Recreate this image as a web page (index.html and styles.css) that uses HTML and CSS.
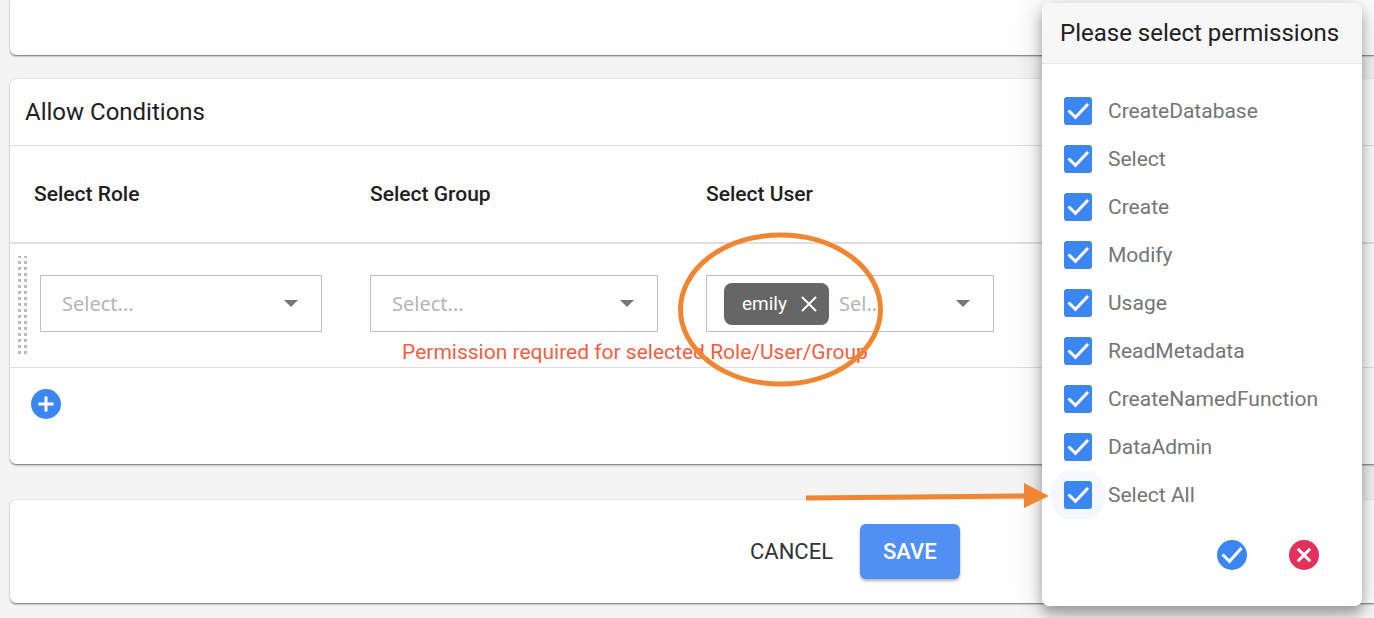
FILE: index.html
```html
<!DOCTYPE html>
<html lang="en">
<head>
<meta charset="utf-8">
<title>Policy permissions</title>
<link rel="stylesheet" href="styles.css">
</head>
<body>
<main class="page">
  <section class="card card-previous"></section>

  <section class="card card-conditions">
    <h2 class="card-title">Allow Conditions</h2>
    <table class="conditions">
      <colgroup>
        <col class="col-handle"><col class="col-role"><col class="col-wide"><col class="col-wide"><col>
      </colgroup>
      <thead>
        <tr>
          <th colspan="2" scope="col" id="role">Select Role</th>
          <th scope="col" id="group">Select Group</th>
          <th scope="col" id="user">Select User</th>
          <th></th>
        </tr>
      </thead>
      <tbody>
        <tr>
          <td rowspan="2" class="cell-handle"><div class="handle"></div></td>
          <td class="cell-role">
            <div class="field">
              <select class="field-select" aria-labelledby="role"><option>Select...</option></select>
              <svg class="caret" viewBox="0 0 14 7"><path d="M0 0h14L7 7z"/></svg>
            </div>
          </td>
          <td class="cell-field">
            <div class="field">
              <select class="field-select" aria-labelledby="group"><option>Select...</option></select>
              <svg class="caret" viewBox="0 0 14 7"><path d="M0 0h14L7 7z"/></svg>
            </div>
          </td>
          <td class="cell-field">
            <div class="field field-multi">
              <span class="chip">emily
                <button class="chip-remove" type="button" aria-label="Remove emily"><svg viewBox="0 0 16 16"><path d="M1 1l14 14M15 1L1 15"/></svg></button>
              </span>
              <select class="field-select" aria-labelledby="user"><option>Sel...</option></select>
              <svg class="caret" viewBox="0 0 14 7"><path d="M0 0h14L7 7z"/></svg>
            </div>
          </td>
          <td></td>
        </tr>
        <tr>
          <td></td>
          <td colspan="3" class="cell-error">Permission required for selected Role/User/Group</td>
        </tr>
      </tbody>
    </table>
    <div class="add-row">
      <button class="round" type="button" aria-label="Add condition"><svg viewBox="0 0 30 30"><path class="thick" d="M15 7.5v15M7.5 15h15"/></svg></button>
    </div>
  </section>

  <section class="card card-actions">
    <button class="btn" type="button">CANCEL</button>
    <button class="btn btn-primary" type="button">SAVE</button>
  </section>
</main>

<aside class="popover" role="dialog" aria-labelledby="popover-title">
  <h3 class="popover-title" id="popover-title">Please select permissions</h3>
  <div class="permissions">
    <label class="permission"><span class="tick"><input type="checkbox" checked><svg viewBox="0 0 28 28"><path d="M4.500 13.500l7 6.800L24 7"/></svg></span>CreateDatabase</label>
    <label class="permission"><span class="tick"><input type="checkbox" checked><svg viewBox="0 0 28 28"><path d="M4.500 13.500l7 6.800L24 7"/></svg></span>Select</label>
    <label class="permission"><span class="tick"><input type="checkbox" checked><svg viewBox="0 0 28 28"><path d="M4.500 13.500l7 6.800L24 7"/></svg></span>Create</label>
    <label class="permission"><span class="tick"><input type="checkbox" checked><svg viewBox="0 0 28 28"><path d="M4.500 13.500l7 6.800L24 7"/></svg></span>Modify</label>
    <label class="permission"><span class="tick"><input type="checkbox" checked><svg viewBox="0 0 28 28"><path d="M4.500 13.500l7 6.800L24 7"/></svg></span>Usage</label>
    <label class="permission"><span class="tick"><input type="checkbox" checked><svg viewBox="0 0 28 28"><path d="M4.500 13.500l7 6.800L24 7"/></svg></span>ReadMetadata</label>
    <label class="permission"><span class="tick"><input type="checkbox" checked><svg viewBox="0 0 28 28"><path d="M4.500 13.500l7 6.800L24 7"/></svg></span>CreateNamedFunction</label>
    <label class="permission"><span class="tick"><input type="checkbox" checked><svg viewBox="0 0 28 28"><path d="M4.500 13.500l7 6.800L24 7"/></svg></span>DataAdmin</label>
    <label class="permission"><span class="tick tick-focus"><input type="checkbox" checked><svg viewBox="0 0 28 28"><path d="M4.500 13.500l7 6.800L24 7"/></svg></span>Select All</label>
  </div>
  <div class="popover-actions">
    <button class="round" type="button" aria-label="Apply"><svg viewBox="0 0 30 30"><path d="M5.500 14.500l7 6.800L24.500 8"/></svg></button>
    <button class="round round-danger" type="button" aria-label="Dismiss"><svg viewBox="0 0 30 30"><path class="thick" d="M8.800 8.800l12.400 12.400M21.200 8.800L8.800 21.200"/></svg></button>
  </div>
</aside>

<svg class="mark mark-ellipse" viewBox="0 0 206 156"><ellipse cx="102.500" cy="77.500" rx="100" ry="74.500"/></svg>
<svg class="mark mark-arrow" viewBox="0 0 244 26"><path class="line" d="M0 15l220-2"/><path class="head" d="M218 0l25 13-25 12z"/></svg>
</body>
</html>
```

FILE: styles.css
```css
* {
  box-sizing: border-box;
}

body {
  margin: 0;
  background: #f4f4f4;
  color: #212121;
  font-family: Roboto, "Liberation Sans", sans-serif;
  font-size: 21px;
  line-height: 32px;
}

button,
select {
  font: inherit;
}

.page {
  padding: 0 0 12px 10px;
}

.card {
  background: #fefefe;
  border-radius: 6px 0 0 6px;
  box-shadow: 0 1px 1px rgba(0, 0, 0, 0.3), 0 2px 2px rgba(0, 0, 0, 0.16), 0 0 2px rgba(0, 0, 0, 0.18);
}

.card-previous {
  height: 55px;
  border-top-left-radius: 0;
}

.card-conditions {
  margin-top: 24px;
}

.card-title {
  margin: 0;
  padding: 17px 15px;
  border-bottom: 1px solid #dedede;
  font-size: 24px;
  font-weight: 400;
}

.conditions {
  width: 100%;
  table-layout: fixed;
  border-collapse: separate;
  border-spacing: 0;
  border-bottom: 1px solid #dfdfdf;
}

.col-handle {
  width: 30px;
}

.col-role {
  width: 306px;
}

.col-wide {
  width: 336px;
}

.conditions th {
  padding: 32px 24px;
  border-bottom: 2px solid #dfdfdf;
  font-weight: 500;
  text-align: left;
}

.conditions td {
  padding: 0;
}

.conditions .cell-handle {
  padding: 12px 0 0 8px;
  vertical-align: top;
}

.conditions .cell-role {
  padding: 31px 24px 0 0;
}

.conditions .cell-field {
  padding: 31px 24px 0;
}

.conditions .cell-error {
  height: 35px;
  padding: 4px 0 0 56px;
  color: #ef6043;
  line-height: 30px;
}

.handle {
  width: 9px;
  height: 98px;
  background: conic-gradient(transparent 75%, #bdbdbd 0) 0 100% / 6px 6px;
  background-position: 0 -1px;
}

.field {
  display: grid;
  grid-template-columns: 1fr auto;
  align-items: center;
  height: 57px;
  padding-right: 23px;
  border: 1px solid #bfbfbf;
  font-family: "Noto Sans", sans-serif;
  font-size: 20px;
}

.field-multi {
  grid-template-columns: auto 1fr auto;
  padding-left: 17px;
}

.field-select {
  appearance: none;
  min-width: 0;
  height: 55px;
  padding: 0 0 0 21px;
  border: 0;
  background: transparent;
  color: #b5b5b5;
}

.field-multi .field-select {
  padding-left: 10px;
}

.caret {
  width: 14px;
  height: 7px;
  fill: #757575;
}

.chip {
  display: flex;
  align-items: center;
  gap: 14px;
  height: 42px;
  padding: 0 12px 0 18px;
  border-radius: 8px;
  background: #666;
  color: #fff;
  font-family: Roboto, sans-serif;
  font-size: 19px;
}

.chip-remove {
  display: flex;
  padding: 0;
  border: 0;
  background: none;
}

.chip-remove svg {
  width: 16px;
  height: 16px;
  fill: none;
  stroke: #fff;
  stroke-width: 2;
}

.add-row {
  padding: 21px 21px 45px;
}

.round {
  display: block;
  width: 30px;
  height: 30px;
  padding: 0;
  border: 0;
  border-radius: 50%;
  background: #3b86f1;
}

.round svg {
  display: block;
  fill: none;
  stroke: #fff;
  stroke-width: 3;
}

.round .thick {
  stroke-width: 3;
}

.round-danger {
  background: #e2315d;
}

.card-actions {
  display: flex;
  gap: 12px;
  margin-top: 36px;
  padding: 24px 0 24px 725px;
}

.btn {
  height: 55px;
  padding: 0 15px;
  border: 0;
  border-radius: 6px;
  background: transparent;
  color: #333;
  font-size: 22px;
  line-height: 28px;
}

.btn-primary {
  padding: 0 23px;
  background: #4f90f2;
  color: #fff;
  font-weight: 500;
  box-shadow: 0 2px 3px rgba(0, 0, 0, 0.3);
}

.popover {
  position: absolute;
  top: 3px;
  right: 12px;
  width: 320px;
  border-radius: 7px;
  background: #fff;
  box-shadow: 0 8px 12px rgba(0, 0, 0, 0.28), 0 2px 28px rgba(0, 0, 0, 0.2);
}

.popover-title {
  margin: 0;
  padding: 14px 18px;
  border-bottom: 1px solid #e8e8e8;
  border-radius: 7px 7px 0 0;
  background: #f7f7f7;
  font-size: 24px;
  font-weight: 400;
  white-space: nowrap;
}

.permissions {
  padding: 23px 22px 0;
}

.permission {
  display: flex;
  align-items: center;
  gap: 16px;
  height: 48px;
  color: #757575;
}

.tick {
  display: grid;
  flex: none;
  width: 28px;
  height: 28px;
  border-radius: 50%;
}

.tick input,
.tick svg {
  grid-area: 1 / 1;
  width: 28px;
  height: 28px;
  margin: 0;
}

.tick input {
  appearance: none;
  border-radius: 3px;
  background: #3b86f1;
}

.tick svg {
  fill: none;
  stroke: #fff;
  stroke-width: 3;
  pointer-events: none;
}

.tick-focus {
  background: #f5f9ff;
  box-shadow: 0 0 0 14px #f5f9ff;
  clip-path: inset(-10px -16px);
}

.popover-actions {
  display: flex;
  justify-content: flex-end;
  gap: 42px;
  padding: 21px 43px 36px;
}

.mark {
  position: absolute;
  fill: none;
  stroke: #f08632;
  stroke-width: 5;
  pointer-events: none;
}

.mark-ellipse {
  left: 678px;
  top: 232px;
  width: 206px;
  height: 156px;
}

.mark-arrow {
  left: 806px;
  top: 483px;
  width: 244px;
  height: 26px;
}

.mark .head {
  fill: #f08632;
  stroke: none;
}
```
